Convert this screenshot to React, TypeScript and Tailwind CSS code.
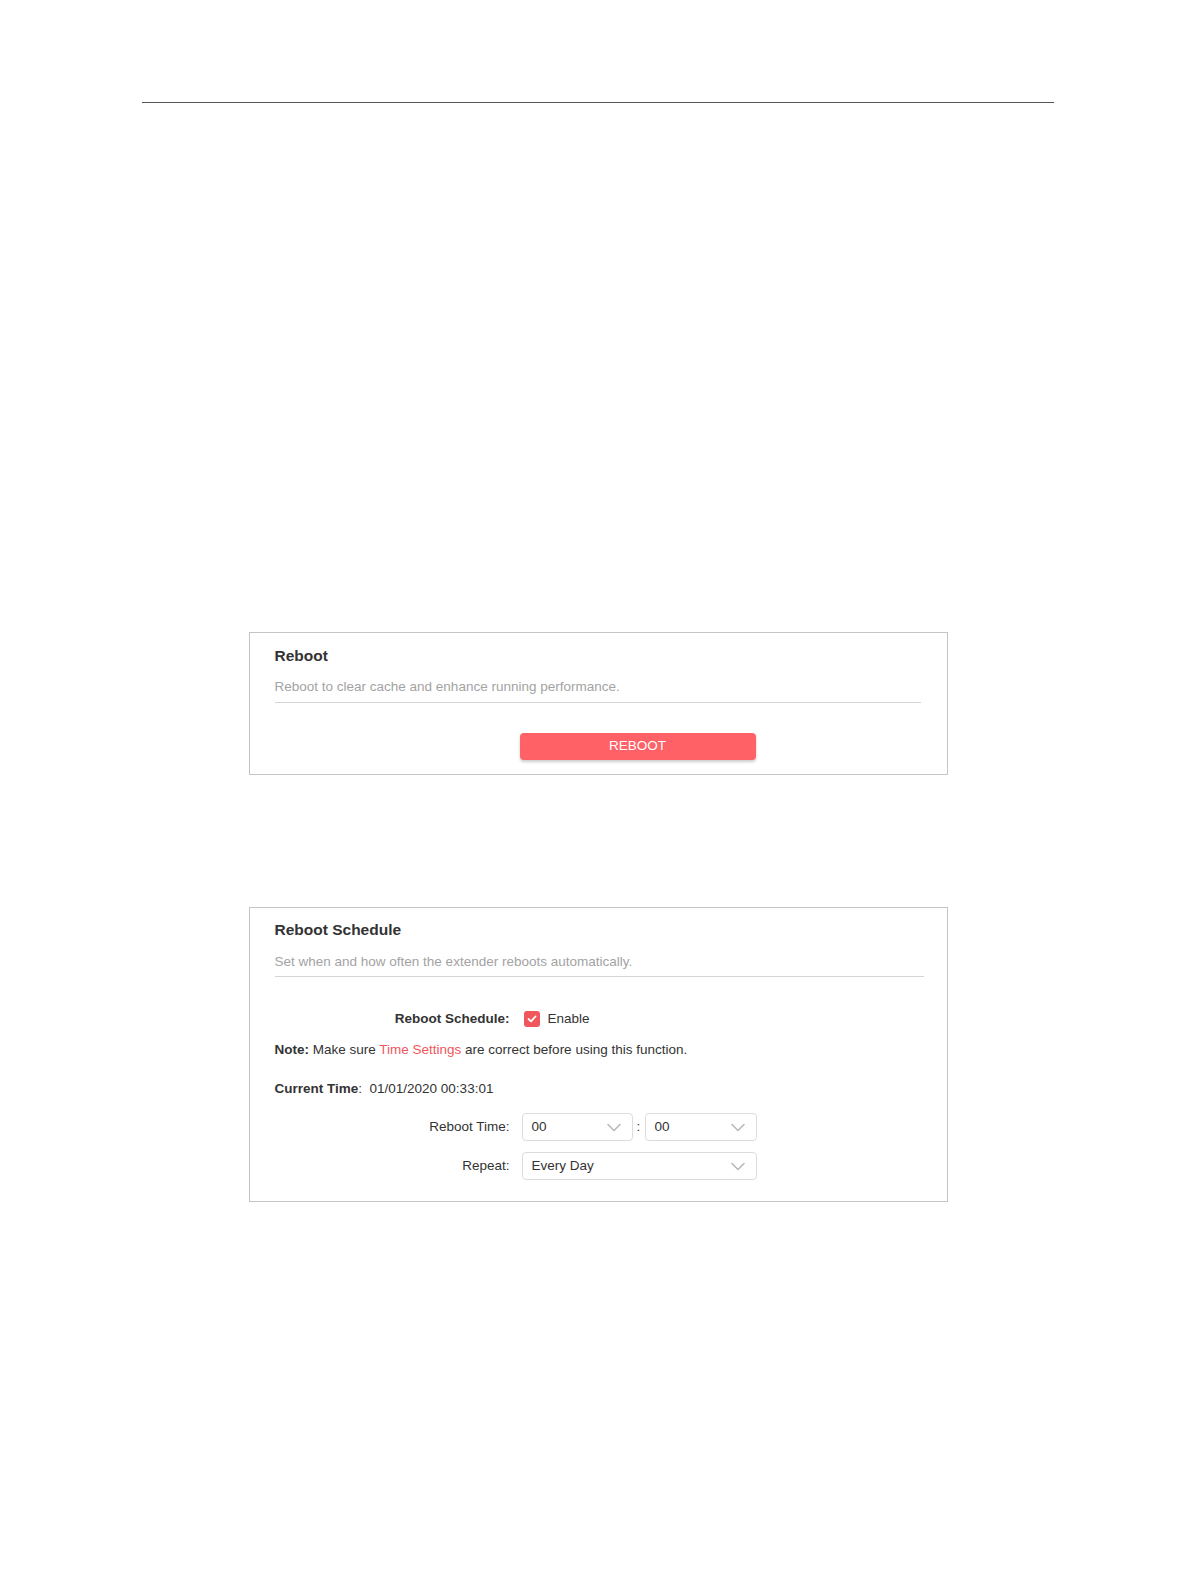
import React from "react";

function Chevron() {
  return (
    <svg width="14" height="9" viewBox="0 0 14 9" fill="none" className="shrink-0">
      <path d="M1 1.5 L7 7.5 L13 1.5" stroke="#b9b9b9" strokeWidth="1.6" strokeLinecap="round" strokeLinejoin="round" />
    </svg>
  );
}

function Select({ value, className }: { value: string; className: string }) {
  return (
    <div className={`flex items-center justify-between h-[28px] border border-[#dcdcdc] rounded-[4px] pl-[9px] pr-[11px] text-[13.5px] text-[#333] ${className}`}>
      <span>{value}</span>
      <Chevron />
    </div>
  );
}

export default function App() {
  return (
    <div className="w-[1196px] min-h-[1582px] bg-white" style={{ fontFamily: '"Liberation Sans", Arial, sans-serif' }}>
      <div className="pt-[102px] px-[142px]">
        <div className="h-px bg-[#555]" />
      </div>

      {/* Reboot box */}
      <div className="mt-[529px] mx-auto w-[699px] border border-[#c4c4c4] pl-[25px] pr-[26px] pt-[13px] pb-[14px]">
        <div className="text-[15.5px] leading-[20px] font-bold text-[#333]">Reboot</div>
        <div className="mt-[11px] text-[13.5px] leading-[20px] text-[#a3a3a3] pb-[5px] border-b border-[#d4d4d4]">
          Reboot to clear cache and enhance running performance.
        </div>
        <div className="mt-[30px] ml-[245px] w-[236px] h-[27px] rounded-[4px] bg-[#ff6166] shadow-[0_2px_3px_rgba(0,0,0,0.2)] flex items-center justify-center text-white text-[13.5px]">
          REBOOT
        </div>
      </div>

      {/* Reboot Schedule box */}
      <div className="mt-[132px] mx-auto w-[699px] border border-[#c4c4c4] pl-[25px] pr-[23px] pt-[12px] pb-[21px]">
        <div className="text-[15.5px] leading-[20px] font-bold text-[#333]">Reboot Schedule</div>
        <div className="mt-[12px] text-[13.5px] leading-[20px] text-[#a3a3a3] pb-[4px] border-b border-[#d4d4d4]">
          Set when and how often the extender reboots automatically.
        </div>

        <div className="mt-[32px] flex items-center h-[20px] text-[13.5px]">
          <div className="w-[235px] text-right font-bold text-[#333]">Reboot Schedule:</div>
          <div className="ml-[14px] w-[16px] h-[16px] rounded-[3px] bg-[#f0575c] flex items-center justify-center">
            <svg width="10" height="8" viewBox="0 0 10 8" fill="none">
              <path d="M1.5 4 L4 6.3 L8.5 1.5" stroke="white" strokeWidth="1.8" strokeLinecap="round" strokeLinejoin="round" />
            </svg>
          </div>
          <span className="ml-[8px] text-[#333]">Enable</span>
        </div>

        <div className="mt-[11px] h-[20px] leading-[20px] text-[13.5px] text-[#333]">
          <span className="font-bold">Note:</span> Make sure <span className="text-[#f0575c]">Time Settings</span> are correct before using this function.
        </div>

        <div className="mt-[19px] h-[20px] leading-[20px] text-[13.5px] text-[#333]">
          <span className="font-bold">Current Time</span>:&nbsp; 01/01/2020 00:33:01
        </div>

        <div className="mt-[14px] flex items-center text-[13.5px] text-[#333]">
          <div className="w-[235px] text-right">Reboot Time:</div>
          <div className="ml-[12px] flex items-center">
            <Select value="00" className="w-[111px]" />
            <span className="w-[12px] text-center">:</span>
            <Select value="00" className="w-[112px]" />
          </div>
        </div>

        <div className="mt-[11px] flex items-center text-[13.5px] text-[#333]">
          <div className="w-[235px] text-right">Repeat:</div>
          <div className="ml-[12px]">
            <Select value="Every Day" className="w-[235px]" />
          </div>
        </div>
      </div>
    </div>
  );
}
